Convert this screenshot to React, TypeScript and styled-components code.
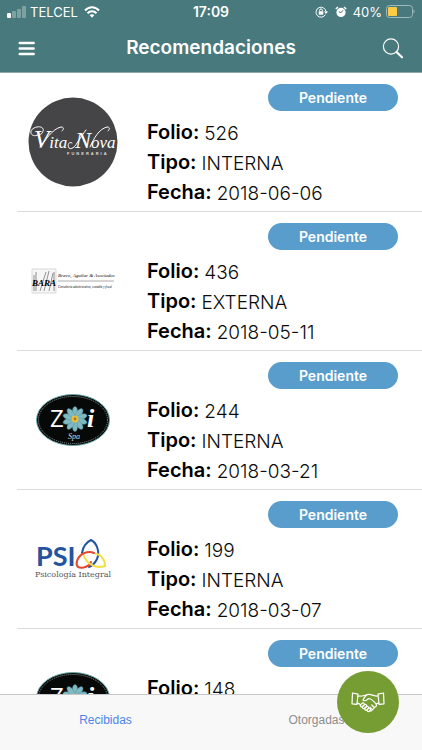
import React from "react";
import styled, { createGlobalStyle } from "styled-components";

const GlobalStyle = createGlobalStyle`
  *, *::before, *::after { box-sizing: border-box; }
  body { margin: 0; background: #fff; font-family: Inter, "Liberation Sans", sans-serif; color: #0b0b0b; }
  button { font: inherit; border: 0; padding: 0; background: none; cursor: pointer; }
`;

const Screen = styled.div`
  position: relative;
  display: flex;
  flex-direction: column;
  height: 100vh;
  overflow: hidden;
`;

const Header = styled.header`
  flex: none;
  background: #47797d;
  color: #fff;
  border-bottom: 1px solid #8fa9ac;
`;

const StatusBar = styled.div`
  display: grid;
  grid-template-columns: 1fr auto 1fr;
  align-items: center;
  height: 24px;
  padding: 0 7px;
  font-size: 13px;
  line-height: 24px;
`;

const StatusGroup = styled.div<{ $end?: boolean }>`
  display: flex;
  align-items: center;
  justify-content: ${(p) => (p.$end ? "flex-end" : "flex-start")};
  gap: ${(p) => (p.$end ? "4px" : "6px")};
`;

const Carrier = styled.span`
  display: flex;
  align-items: center;
  gap: 4px;
`;

const StatusIcons = styled.span`
  display: flex;
  gap: 6px;
  padding-right: 2px;
`;

const Clock = styled.time`
  font-size: 14px;
  font-weight: 600;
`;

const NavBar = styled.div`
  display: grid;
  grid-template-columns: 1fr auto 1fr;
  align-items: center;
  height: 48px;
  padding: 0 18px 0 18px;
`;

const NavButton = styled.button<{ $end?: boolean }>`
  display: flex;
  justify-self: ${(p) => (p.$end ? "end" : "start")};
  color: #fff;
`;

const Title = styled.h1`
  margin: 0;
  font-size: 19px;
  line-height: 24px;
  font-weight: 600;
`;

const List = styled.ul`
  flex: 1;
  min-height: 0;
  margin: 0;
  padding: 0 0 0 17px;
  list-style: none;
  overflow-y: auto;
  scrollbar-width: none;
`;

const Item = styled.li`
  display: grid;
  grid-template-columns: 112px 1fr;
  column-gap: 18px;
  height: 139px;
  border-bottom: 1px solid #dcdcde;
`;

const Logo = styled.div`
  display: flex;
  align-items: center;
  justify-content: center;
`;

const Body = styled.div`
  display: flex;
  flex-direction: column;
  padding: 11px 24px 0 0;
`;

const Badge = styled.span`
  align-self: flex-end;
  width: 130px;
  margin-bottom: 8px;
  border-radius: 14px;
  background: #589dcb;
  color: #fff;
  font-size: 14px;
  line-height: 27px;
  font-weight: 600;
  text-align: center;
`;

const Details = styled.dl`
  margin: 0;
`;

const Field = styled.div`
  display: flex;
  gap: 5px;
  height: 30px;
`;

const Label = styled.dt`
  font-size: 20px;
  line-height: 27px;
  font-weight: 600;
  color: #000;
`;

const Value = styled.dd`
  margin: 0;
  font-size: 19px;
  line-height: 30px;
  font-weight: 300;
`;

const Tabs = styled.nav`
  flex: none;
  display: grid;
  grid-template-columns: 1fr 1fr;
  height: 56px;
  border-top: 1px solid #c6c6c8;
  background: #f8f8f8;
`;

const Tab = styled.button<{ $active?: boolean }>`
  padding-bottom: 5px;
  font-family: "Liberation Sans", sans-serif;
  font-size: 12px;
  line-height: 16px;
  color: ${(p) => (p.$active ? "#4a86e8" : "#8e8e8e")};
`;

const Fab = styled.button`
  position: absolute;
  right: 23px;
  bottom: 17px;
  display: grid;
  place-items: center;
  width: 62px;
  height: 62px;
  border-radius: 50%;
  background: #769c34;
`;

const VitaNovaLogo = () => (
  <svg width="90" height="90" viewBox="0 0 90 90" role="img" aria-label="Vita Nova Funeraria">
    <circle cx="45" cy="45" r="44.5" fill="#454547" />
    <g fill="#fff" fontFamily="Liberation Serif, serif" fontStyle="italic" fontSize="17">
      <text x="6" y="51">
        <tspan fontSize="25">V</tspan>ita
      </text>
      <text x="47" y="51">
        <tspan fontSize="24">N</tspan>ova
      </text>
    </g>
    <text x="39" y="58" fontSize="4" fontWeight="700" fill="#ddd" fontFamily="Liberation Sans, sans-serif" letterSpacing="2">FUNERARIA</text>
    <g fill="none" stroke="#fff" strokeLinecap="round">
      <path d="M10 38C3 41 0 34 6 31C12 28 18 31 14 36C13 38 11 38 10 36" />
      <path d="M12 50C17 44 24 32 33 30C36 30 36 32 34 34" />
      <path d="M44 46C41 44 39 48 41 51C43 53 47 50 49 46C53 40 55 37 58 33" />
      <path d="M62 50C66 41 71 32 79 30C82 30 82 32 80 34" />
    </g>
  </svg>
);

const BravoLogo = () => (
  <svg width="84" height="26" viewBox="0 0 84 26" role="img" aria-label="Bravo, Aguilar & Asociados">
    <path d="M1 1H25V25H1Z" fill="#f6f6f6" stroke="#d9d9d9" />
    <path d="M3 23V7M5 23V4M9 23L15 4M13 23L18 3M18 23L22 5M23 23V4" stroke="#777" strokeWidth="0.8" />
    <g fill="#000" fontFamily="Liberation Serif, serif" fontStyle="italic">
      <text x="1" y="18" fontSize="9" fontWeight="700">BARA</text>
      <text x="27" y="9" fontSize="5">Bravo, Aguilar &amp; Asociados</text>
      <text x="27" y="20" fontSize="3">Consultoría administrativa, contable y fiscal</text>
    </g>
    <path d="M27 13H83" stroke="#aaa" />
  </svg>
);

const petals = [0, 36, 72, 108, 144, 180, 216, 252, 288, 324];

const ZoiLogo = () => (
  <svg width="74" height="52" viewBox="0 0 74 52" role="img" aria-label="Zoi Spa">
    <ellipse cx="37" cy="26" rx="36.5" ry="25.5" fill="#070909" stroke="#6aa7a6" />
    <ellipse cx="37" cy="26" rx="34.5" ry="23.5" fill="none" stroke="#dbe9e8" strokeDasharray="1 1" strokeWidth="0.6" />
    <text x="14" y="33" fontSize="24" fill="#fff" fontFamily="Open Sans, sans-serif">Z</text>
    <text x="51" y="33" fontSize="26" fill="#fff" fontFamily="Liberation Serif, serif" fontStyle="italic" fontWeight="700">i</text>
    <g fill="#7fbac3" stroke="#4d8a95" strokeWidth="0.4">
      {petals.map((angle) => (
        <ellipse key={angle} cx="39" cy="18" rx="2.7" ry="5.5" transform={`rotate(${angle} 39 25)`} />
      ))}
    </g>
    <circle cx="39" cy="25" r="3.4" fill="#edbf35" />
    <circle cx="39" cy="25" r="1.4" fill="#a7772a" />
    <text x="32" y="45" fontSize="8" fill="#d9d9d9" fontFamily="Liberation Serif, serif" fontStyle="italic">Spa</text>
  </svg>
);

const PsiLogo = () => (
  <svg width="76" height="42" viewBox="0 0 76 42" role="img" aria-label="PSI Psicología Integral">
    <text x="1" y="28" fontSize="27" fontWeight="700" fill="#24549f" fontFamily="Lato, sans-serif">PSI</text>
    <g fill="none" strokeWidth="2" strokeLinecap="round">
      <path d="M47 15C48 8 52 4 56 2C62 5 65 14 62 21C60 25 57 28 54 29" stroke="#24549f" />
      <path d="M59 15C53 12 44 16 42 23C41 26 42 28 43 29C48 31 55 28 56 24" stroke="#e2492f" />
      <path d="M49 18C52 26 61 31 70 28C70 21 65 16 61 16" stroke="#f2df43" />
    </g>
    <text x="0" y="39" fontSize="8" fill="#555" fontFamily="DejaVu Serif, serif">Psicología Integral</text>
  </svg>
);

const SignalIcon = () => (
  <svg width="19" height="12" viewBox="0 0 19 12" fill="#fff" aria-hidden="true">
    <rect x="0" y="7" width="4" height="5" rx="1" />
    <rect x="5" y="5" width="4" height="7" rx="1" opacity="0.3" />
    <rect x="10" y="3" width="4" height="9" rx="1" opacity="0.3" />
    <rect x="15" y="0" width="4" height="12" rx="1" opacity="0.3" />
  </svg>
);

const WifiIcon = () => (
  <svg width="16" height="12" viewBox="0 0 16 12" fill="none" stroke="#fff" strokeWidth="2" aria-hidden="true">
    <path d="M1 4.5C5 0.2 11 0.2 15 4.5" />
    <path d="M3.5 7.3C6 4.7 10 4.7 12.5 7.3" />
    <path d="M5.6 9.1C7 7.8 9 7.8 10.4 9.1L8 11.8Z" fill="#fff" stroke="none" />
  </svg>
);

const RotationLockIcon = () => (
  <svg width="14" height="12" viewBox="0 0 14 12" fill="none" stroke="#fff" aria-hidden="true">
    <path d="M10.4 8.6A5 5 0 1 1 11 6" />
    <path d="M9 5.5H13L11 8Z" fill="#fff" stroke="none" />
    <rect x="3.7" y="5.3" width="4.6" height="3.4" fill="#fff" stroke="none" />
    <path d="M4.7 5.5V4.2A1.3 1.3 0 0 1 7.3 4.2V5.5" />
  </svg>
);

const AlarmIcon = () => (
  <svg width="12" height="12" viewBox="0 0 12 12" fill="none" aria-hidden="true">
    <circle cx="6" cy="6.4" r="4.6" fill="#fff" />
    <path d="M0.8 3L3 1M11.2 3L9 1" stroke="#fff" strokeWidth="1.6" />
    <path d="M6 6.8L3.8 5.6M6 6.8L8 4.3" stroke="#47797d" />
  </svg>
);

const BatteryIcon = () => (
  <svg width="29" height="14" viewBox="0 0 29 14" aria-hidden="true">
    <rect x="0.5" y="0.5" width="26" height="12" rx="3" fill="none" stroke="#9db9bb" />
    <rect x="2" y="2" width="9" height="9" rx="1" fill="#fbcb43" />
    <path d="M27.5 4.5C29 5 29 8 27.5 8.5Z" fill="#9db9bb" />
  </svg>
);

const MenuIcon = () => (
  <svg width="18" height="15" viewBox="0 0 18 15" stroke="#fff" strokeWidth="2.6" strokeLinecap="round" aria-hidden="true">
    <path d="M1.8 2H15.6M1.8 7.5H15.6M1.8 13H15.6" />
  </svg>
);

const SearchIcon = () => (
  <svg width="22" height="21" viewBox="0 0 22 21" fill="none" stroke="#fff" strokeLinecap="round" aria-hidden="true">
    <circle cx="9" cy="8.5" r="7.6" strokeWidth="1.2" />
    <path d="M14.5 14L20 19.3" strokeWidth="2.2" />
  </svg>
);

const HandshakeIcon = () => (
  <svg width="34" height="22" viewBox="0 0 34 22" fill="none" stroke="#fff" strokeWidth="1.2" strokeLinejoin="round" strokeLinecap="round" aria-hidden="true">
    <path d="M1.5 2L7 3.2L6 13.4L1 12.8Z" />
    <path d="M32.5 2L27 3.2L28 13.4L33 12.8Z" />
    <path d="M7 5C10 5.5 12 4.8 15 4" />
    <path d="M27 5C23 5.5 20 2.6 17 3.4C14.5 4 13 7 12 9C13.5 10.6 16 9.3 17.5 7.5C20 7.8 23.5 11 25.4 13.4" />
    <path d="M6.3 12.2C8 12.2 8.8 13 9.6 14" />
    <path d="M27.8 12.2C26.8 12.2 26 12.4 25.2 13" />
    <rect x="9" y="12.6" width="4.6" height="2.6" rx="1.3" transform="rotate(-42 11.3 13.9)" />
    <rect x="11" y="14.2" width="5" height="2.6" rx="1.3" transform="rotate(-42 13.5 15.5)" />
    <rect x="13.5" y="16" width="4.4" height="2.6" rx="1.3" transform="rotate(-42 15.7 17.3)" />
    <rect x="16" y="17.6" width="3.6" height="2.6" rx="1.3" transform="rotate(-42 17.8 18.9)" />
    <path d="M19 19.8C20.6 20.4 21.6 19.2 20.8 18L19 16.2M21 18.2C22.6 18.6 23.6 17.2 22.8 16L20.8 14M23 16.2C24.8 16.4 25.9 14.8 25.4 13.4" />
  </svg>
);

type Recommendation = {
  folio: string;
  kind: string;
  date: string;
  logo: React.ComponentType;
};

const recommendations: Recommendation[] = [
  { folio: "526", kind: "INTERNA", date: "2018-06-06", logo: VitaNovaLogo },
  { folio: "436", kind: "EXTERNA", date: "2018-05-11", logo: BravoLogo },
  { folio: "244", kind: "INTERNA", date: "2018-03-21", logo: ZoiLogo },
  { folio: "199", kind: "INTERNA", date: "2018-03-07", logo: PsiLogo },
  { folio: "148", kind: "INTERNA", date: "2018-02-20", logo: ZoiLogo },
];

export default function App() {
  return (
    <Screen>
      <GlobalStyle />
      <Header>
        <StatusBar>
          <StatusGroup>
            <Carrier>
              <SignalIcon />
              TELCEL
            </Carrier>
            <WifiIcon />
          </StatusGroup>
          <Clock>17:09</Clock>
          <StatusGroup $end>
            <StatusIcons>
              <RotationLockIcon />
              <AlarmIcon />
            </StatusIcons>
            <span>40%</span>
            <BatteryIcon />
          </StatusGroup>
        </StatusBar>
        <NavBar>
          <NavButton aria-label="Menú">
            <MenuIcon />
          </NavButton>
          <Title>Recomendaciones</Title>
          <NavButton $end aria-label="Buscar">
            <SearchIcon />
          </NavButton>
        </NavBar>
      </Header>
      <List>
        {recommendations.map(({ folio, kind, date, logo: LogoMark }) => (
          <Item key={folio}>
            <Logo>
              <LogoMark />
            </Logo>
            <Body>
              <Badge>Pendiente</Badge>
              <Details>
                <Field>
                  <Label>Folio:</Label>
                  <Value>{folio}</Value>
                </Field>
                <Field>
                  <Label>Tipo:</Label>
                  <Value>{kind}</Value>
                </Field>
                <Field>
                  <Label>Fecha:</Label>
                  <Value>{date}</Value>
                </Field>
              </Details>
            </Body>
          </Item>
        ))}
      </List>
      <Tabs>
        <Tab $active>Recibidas</Tab>
        <Tab>Otorgadas</Tab>
      </Tabs>
      <Fab aria-label="Nueva recomendación">
        <HandshakeIcon />
      </Fab>
    </Screen>
  );
}
